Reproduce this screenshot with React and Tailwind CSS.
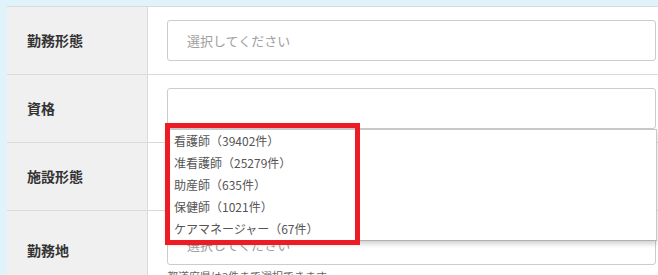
import React from "react";

const rows = [
  { label: "勤務形態", placeholder: "選択してください" },
  { label: "資格", placeholder: "" },
  { label: "施設形態", placeholder: "選択してください" },
  { label: "勤務地", placeholder: "選択してください", note: "都道府県は3件まで選択できます" },
];

const items = [
  "看護師（39402件）",
  "准看護師（25279件）",
  "助産師（635件）",
  "保健師（1021件）",
  "ケアマネージャー（67件）",
];

export default function App() {
  return (
    <div className="w-[658px] h-[275px] overflow-hidden bg-[#e1f3fa] pl-[7px] pt-[6px] font-['Noto_Sans_CJK_JP',sans-serif]">
      <div className="relative w-[668px] border-t border-[#dadada] bg-white">
        {rows.map((r) => (
          <div key={r.label} className="flex border-b border-[#dadada]">
            <div className="w-[141px] shrink-0 bg-[#f0f0f0] border-r border-[#dadada] flex items-center pl-[20px] text-[14px] font-bold text-[#333]">
              {r.label}
            </div>
            <div className={r.note ? "flex-1 px-[19px] pt-[13px] pb-[5px]" : "flex-1 px-[19px] pt-[13px] pb-[13px]"}>
              <div className="h-[41px] border border-[#cccccc] rounded-[3px] flex items-center pl-[19px] text-[13px] text-[#a0a0a0]">
                {r.placeholder}
              </div>
              {r.note && (
                <div className="mt-[4px] text-[11px] leading-[15px] text-[#666]">{r.note}</div>
              )}
            </div>
          </div>
        ))}

        <div className="absolute left-[160px] top-[122px] w-[490px] h-[112px] bg-white border border-[#c8c8c8] border-b-[#b0b0b0] shadow-[0_3px_5px_rgba(0,0,0,0.18)]">
          {items.map((it) => (
            <div key={it} className="h-[22px] flex items-center pl-[6px] text-[12px] text-[#555]">
              {it}
            </div>
          ))}
        </div>

        <div className="absolute left-[158px] top-[116px] w-[195px] h-[122px] border-[5px] border-[#ed1c24]" />
      </div>
    </div>
  );
}
